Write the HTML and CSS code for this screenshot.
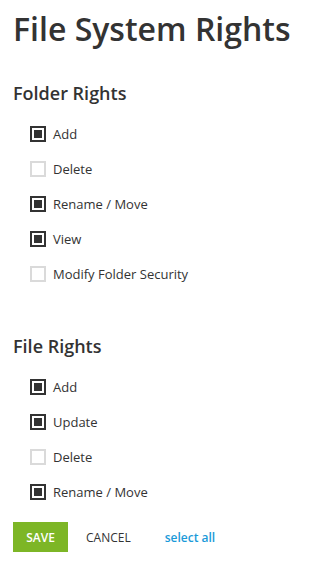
FILE: index.html
```html
<!DOCTYPE html>
<html lang="en">
<head>
    <meta charset="UTF-8">
    <meta name="viewport" content="width=device-width, initial-scale=1.0">
    <title>File System Rights</title>
    <link rel="stylesheet" href="styles.css">
</head>
<body>

    <div class="page">
        <h1>File System Rights</h1>

        <!-- Folder rights -->
        <h2>Folder Rights</h2>
        <div class="rights-list">
            <label class="right"><input type="checkbox" checked><span class="box"></span>Add</label>
            <label class="right"><input type="checkbox"><span class="box"></span>Delete</label>
            <label class="right"><input type="checkbox" checked><span class="box"></span>Rename / Move</label>
            <label class="right"><input type="checkbox" checked><span class="box"></span>View</label>
            <label class="right"><input type="checkbox"><span class="box"></span>Modify Folder Security</label>
        </div>

        <!-- File rights -->
        <h2 class="file-heading">File Rights</h2>
        <div class="rights-list">
            <label class="right"><input type="checkbox" checked><span class="box"></span>Add</label>
            <label class="right"><input type="checkbox" checked><span class="box"></span>Update</label>
            <label class="right"><input type="checkbox"><span class="box"></span>Delete</label>
            <label class="right"><input type="checkbox" checked><span class="box"></span>Rename / Move</label>
        </div>

        <div class="actions">
            <button type="button" class="save-button">SAVE</button>
            <button type="button" class="cancel-button">CANCEL</button>
            <a href="#" class="select-all">select all</a>
        </div>
    </div>

</body>
</html>
```

FILE: styles.css
```css
body {
    font-family: 'Open Sans', sans-serif;
    background-color: #ffffff;
    color: #333333;
    margin: 0;
    padding: 0;
}

.page {
    padding: 9px 13px 0;
}

h1 {
    font-size: 32px;
    font-weight: 600;
    line-height: 40px;
    margin: 0 0 32px;
    color: #333333;
}

h2 {
    font-size: 18px;
    font-weight: 600;
    line-height: 24px;
    margin: 0;
    color: #333333;
}

.file-heading {
    margin-top: 43px;
}

.rights-list {
    display: flex;
    flex-direction: column;
    margin-top: 11px;
    padding-left: 17px;
}

.right {
    display: flex;
    align-items: center;
    gap: 7px;
    height: 35px;
    font-size: 13px;
    color: #333333;
    cursor: pointer;
}

.right input[type="checkbox"] {
    display: none;
}

.box {
    box-sizing: border-box;
    width: 16px;
    height: 16px;
    border: 2px solid #dadada;
    display: flex;
    align-items: center;
    justify-content: center;
}

.right input[type="checkbox"]:checked + .box {
    border-color: #333333;
}

.right input[type="checkbox"]:checked + .box::after {
    content: "";
    width: 8px;
    height: 8px;
    background-color: #333333;
}

.actions {
    display: flex;
    align-items: center;
    margin-top: 13px;
}

.actions button {
    font-family: 'Open Sans', sans-serif;
    font-size: 12px;
    border: none;
    height: 30px;
    cursor: pointer;
}

.save-button {
    background-color: #7db626;
    color: #ffffff;
    font-weight: 600;
    width: 55px;
}

.cancel-button {
    background: none;
    color: #333333;
    padding: 0 18px;
}

.select-all {
    color: #1a9ad9;
    font-size: 12px;
    font-weight: 600;
    text-decoration: none;
    margin-left: 16px;
}
```
